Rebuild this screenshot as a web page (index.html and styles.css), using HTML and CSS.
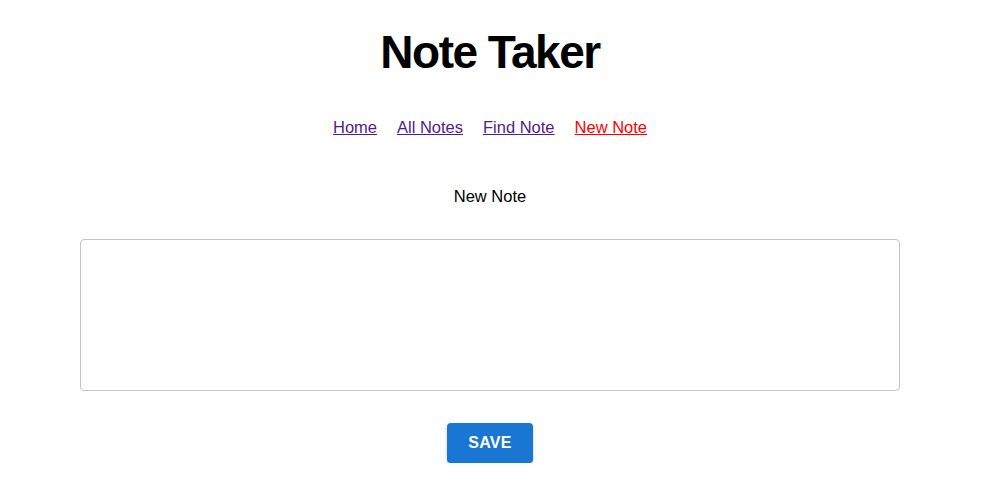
FILE: index.html
```html
<!DOCTYPE html>
<html>
<head>
<meta charset="utf-8">
<link rel="stylesheet" href="styles.css">
</head>
<body>
<header class="header">
  <h1 class="title">Note Taker</h1>
  <nav class="nav">
    <a class="nav-link" href="#">Home</a>
    <a class="nav-link" href="#">All Notes</a>
    <a class="nav-link" href="#">Find Note</a>
    <a class="nav-link active" href="#">New Note</a>
  </nav>
</header>
<main class="main">
  <p class="label">New Note</p>
  <textarea class="note-input"></textarea>
  <button class="save-btn">SAVE</button>
</main>
</body>
</html>
```
FILE: styles.css
```css
* { box-sizing: border-box; }
body {
  margin: 0;
  padding: 0 20px 0 0;
  font-family: "Liberation Sans", Arial, sans-serif;
  background: #fff;
  color: #000;
}
.header {
  display: flex;
  flex-direction: column;
  align-items: center;
}
.title {
  margin: 22px 0 0;
  font-size: 46px;
  line-height: 60px;
  font-weight: bold;
  letter-spacing: -1.5px;
}
.nav {
  display: flex;
  gap: 20px;
  margin-top: 33px;
  font-size: 16.5px;
  line-height: 24px;
}
.nav-link { color: #551a8b; }
.nav-link.active { color: #ff0000; }
.main {
  display: flex;
  flex-direction: column;
  align-items: center;
  padding: 0 80px;
}
.label {
  margin: 45px 0 0;
  font-size: 16.5px;
  line-height: 24px;
}
.note-input {
  margin-top: 31px;
  width: 820px;
  height: 152px;
  border: 1px solid #c4c4c4;
  border-radius: 4px;
  resize: none;
  font-family: inherit;
}
.save-btn {
  margin-top: 32px;
  width: 86px;
  height: 40px;
  background: #1976d2;
  color: #fff;
  border: none;
  border-radius: 4px;
  font-family: inherit;
  font-weight: bold;
  font-size: 16px;
  letter-spacing: 0.3px;
  box-shadow: 0 3px 1px -2px rgba(0,0,0,0.2), 0 2px 2px 0 rgba(0,0,0,0.14), 0 1px 5px 0 rgba(0,0,0,0.12);
}
```
